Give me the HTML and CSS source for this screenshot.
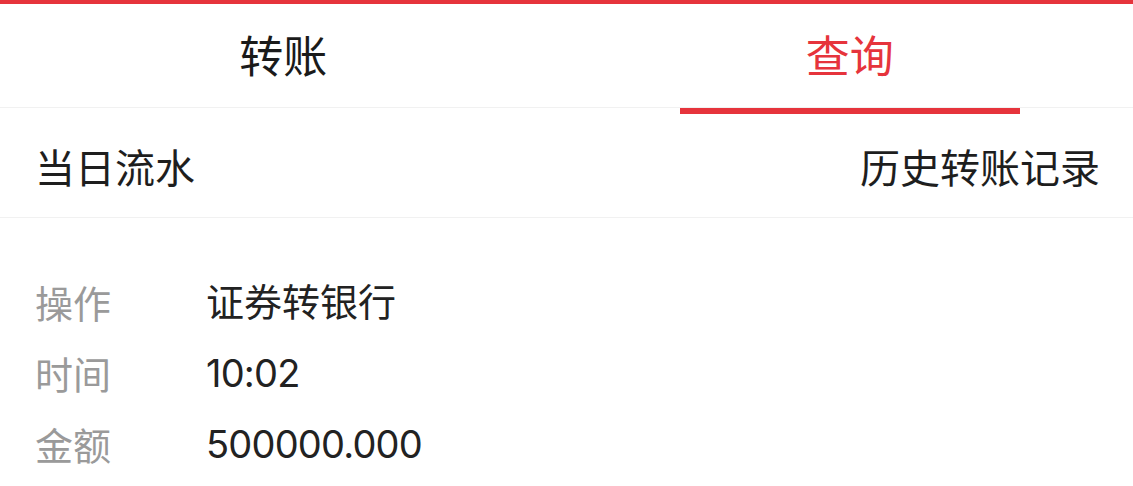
FILE: index.html
```html
<!DOCTYPE html>
<html lang="zh-CN">
<head>
<meta charset="utf-8">
<title>查询</title>
<link rel="stylesheet" href="styles.css">
</head>
<body>
<div class="topbar"></div>
<div class="tabs">
  <div class="tab">转账</div>
  <div class="tab active">查询<span class="indicator"></span></div>
</div>
<div class="subnav">
  <div class="subnav-item">当日流水</div>
  <div class="subnav-item">历史转账记录</div>
</div>
<div class="details">
  <div class="row"><span class="label">操作</span><span class="value">证券转银行</span></div>
  <div class="row"><span class="label">时间</span><span class="value num">10:02</span></div>
  <div class="row"><span class="label">金额</span><span class="value num">500000.000</span></div>
</div>
</body>
</html>
```
FILE: styles.css
```css
html, body {
  margin: 0;
  padding: 0;
  background: #ffffff;
}
body {
  font-family: "Noto Sans CJK SC", sans-serif;
  color: #222222;
  width: 1133px;
  height: 486px;
  overflow: hidden;
}
.topbar {
  height: 4px;
  background: #e6343c;
}
.tabs {
  display: flex;
  height: 103px;
  border-bottom: 1px solid #f1f1f1;
}
.tab {
  position: relative;
  flex: 1;
  display: flex;
  align-items: center;
  justify-content: center;
  padding-bottom: 4px;
  font-size: 44px;
  line-height: 1;
  color: #1a1a1a;
}
.tab.active {
  color: #e6343c;
}
.indicator {
  position: absolute;
  left: 20%;
  right: 20%;
  bottom: -7px;
  height: 6px;
  background: #e6343c;
}
.subnav {
  display: flex;
  justify-content: space-between;
  align-items: center;
  height: 110px;
  padding: 6px 33px 0 35px;
  box-sizing: border-box;
  border-bottom: 1px solid #f1f1f1;
}
.subnav-item {
  font-size: 40px;
  line-height: 1;
  color: #1e1e1e;
}
.details {
  padding: 48px 35px 0 35px;
}
.row {
  display: flex;
  height: 71px;
  align-items: center;
  font-size: 38px;
  line-height: 1;
}
.label {
  width: 171px;
  color: #9a9a9a;
}
.value {
  font-family: Inter, "Noto Sans CJK SC", sans-serif;
  color: #222222;
}
.num {
  letter-spacing: -0.8px;
}
```
